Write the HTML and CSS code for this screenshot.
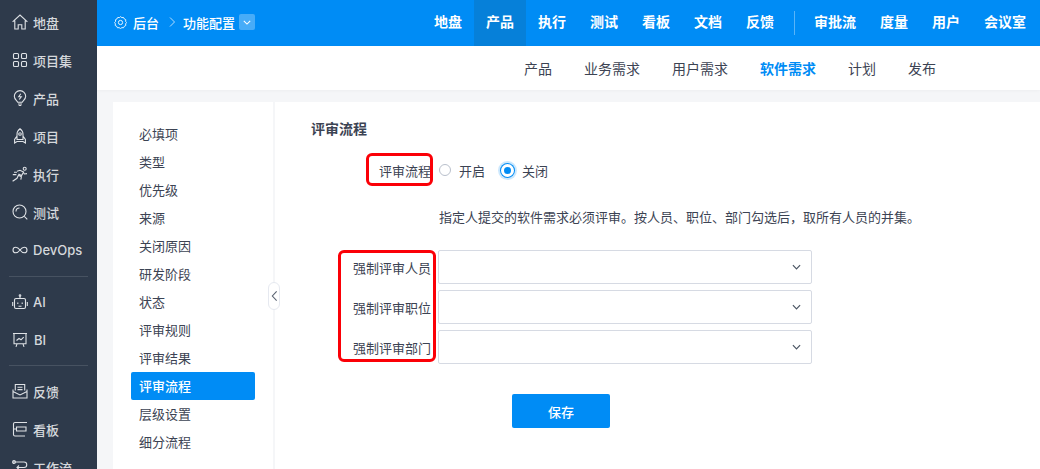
FILE: index.html
```html
<!DOCTYPE html>
<html lang="zh-CN">
<head>
<meta charset="utf-8">
<title>功能配置</title>
<link rel="stylesheet" href="styles.css">
</head>
<body>
<div class="app">
  <aside class="side">
    <a class="side-item"><svg class="side-icon" viewBox="0 0 16 16"><path d="M.6 7.900 8 1l7.400 6.900M2.800 6.400V15h3.400v-4.200h3.600V15h3.400V6.400"/></svg><span>地盘</span></a>
    <a class="side-item"><svg class="side-icon" viewBox="0 0 16 16"><rect x="1.500" y="1.500" width="5" height="5" rx="1"/><rect x="9.500" y="1.500" width="5" height="5" rx="1"/><rect x="1.500" y="9.500" width="5" height="5" rx="1"/><rect x="9.500" y="9.500" width="5" height="5" rx="1"/></svg><span>项目集</span></a>
    <a class="side-item"><svg class="side-icon" viewBox="0 0 16 16"><path d="M5.800 12.300C5.500 10.700 2.300 9.600 2.300 6.300a5.700 5.700 0 0 1 11.400 0c0 3.300-3.200 4.400-3.500 6zM6 14h4M6.700 15.500h2.600M8.800 3.700 6.700 6.800h2.600L7.200 9.500"/></svg><span>产品</span></a>
    <a class="side-item"><svg class="side-icon" viewBox="0 0 16 16"><path d="M8 .8c2 1.500 3 3.400 3 5.700v5H5v-5C5 4.200 6 2.300 8 .8zM5 8 2.600 11.500V15L5 13.500h6l2.400 1.500v-3.500L11 8"/><circle cx="8" cy="6" r="1.300"/></svg><span>项目</span></a>
    <a class="side-item"><svg class="side-icon" viewBox="0 0 16 16"><path d="M.6 15.300 5 12.300l1.400-3 3 1.400-.6 3M5 5.300l3-1 3.600 1.800-2 3.500-3.100-1.500M.8 8.600h3.600M2 6.300h3"/><circle cx="12.700" cy="2.700" r="1.500"/><path d="m11.300 6.300 1 1.700 2.700-.4"/></svg><span>执行</span></a>
    <a class="side-item"><svg class="side-icon" viewBox="0 0 16 16"><circle cx="7.500" cy="7.500" r="6.500"/><path d="m12.300 12.300 3 3M4 7.500A3.500 3.500 0 0 1 7.500 4"/></svg><span>测试</span></a>
    <a class="side-item"><svg class="side-icon" viewBox="0 0 16 16"><path d="M8 8C6.800 6.400 5.700 5.200 3.800 5.200a2.800 2.800 0 0 0 0 5.600C5.700 10.800 6.800 9.600 8 8s2.300-2.800 4.200-2.800a2.800 2.800 0 0 1 0 5.600C10.300 10.800 9.200 9.600 8 8z"/></svg><span>DevOps</span></a>
    <div class="side-rule side-rule-first"></div>
    <a class="side-item"><svg class="side-icon" viewBox="0 0 16 16"><rect x="2.500" y="4.500" width="11" height="10" rx="1.500"/><path d="M8 2.500v2M.7 8v4M15.300 8v4M5.800 8.500v1.600M10.200 8.500v1.600M6.500 12.300h3"/><circle cx="8" cy="1.600" r=".8"/></svg><span>AI</span></a>
    <a class="side-item side-item-bi"><svg class="side-icon" viewBox="0 0 16 16"><path d="M1 1.500h14M2 1.500v10.300h12V1.500M5 11.800l-1 3M11 11.800l1 3M4.500 8.500l2.500-2 2 1.300 2.700-2.600"/></svg><span>BI</span></a>
    <div class="side-rule"></div>
    <a class="side-item"><svg class="side-icon" viewBox="0 0 16 16"><path d="M3.300 7.500V1.500h9.400v6M1 6.500v8.500h14V6.500M1 8.500l7 3.500 7-3.500M5.500 4.200h5M5.500 6.600h5"/></svg><span>反馈</span></a>
    <a class="side-item"><svg class="side-icon" viewBox="0 0 16 16"><path d="M15 1.500H3a1.500 1.500 0 0 0-1.500 1.500v10.500A1.500 1.500 0 0 0 3 15h10M4.500 6h9.500v4H4.500zM1.500 8h3"/></svg><span>看板</span></a>
    <a class="side-item"><svg class="side-icon" viewBox="0 0 16 16"><path d="M1 3h11a2.500 2.500 0 0 1 0 5.500H5M7 6.500l-2 2 2 2"/><circle cx="2" cy="3" r="1.400"/></svg><span>工作流</span></a>
  </aside>
  <div class="workspace">
    <header class="top">
      <div class="crumbs">
        <svg class="crumb-gear" viewBox="0 0 16 16"><path d="M8 .8l1.700 1.200 2-.2 1 1.800 1.800 1-.2 2L15.500 8l-1.200 1.700.2 2-1.800 1-1 1.800-2-.2L8 15.500l-1.700-1.200-2 .2-1-1.800-1.800-1 .2-2L.8 8 2 6.600l-.2-2 1.800-1 1-1.800 2 .2z"/><circle cx="8" cy="8" r="2.600"/></svg>
        <span class="crumb">后台</span>
        <svg class="crumb-sep" viewBox="0 0 8 12"><path d="m2 1.500 4.500 4.500L2 10.500"/></svg>
        <span class="crumb">功能配置</span>
        <span class="crumb-drop"><svg viewBox="0 0 10 6"><path d="m1 1 4 4 4-4"/></svg></span>
      </div>
      <nav class="main-nav">
        <a>地盘</a><a class="is-on">产品</a><a>执行</a><a>测试</a><a>看板</a><a>文档</a><a>反馈</a>
        <i class="nav-rule"></i>
        <a>审批流</a><a>度量</a><a>用户</a><a>会议室</a>
      </nav>
    </header>
    <nav class="sub-nav">
      <a>产品</a><a>业务需求</a><a>用户需求</a><a class="is-on">软件需求</a><a>计划</a><a>发布</a>
    </nav>
    <div class="content">
      <ul class="menu">
        <li>必填项</li><li>类型</li><li>优先级</li><li>来源</li><li>关闭原因</li><li>研发阶段</li><li>状态</li><li>评审规则</li><li>评审结果</li><li class="is-on">评审流程</li><li>层级设置</li><li>细分流程</li>
      </ul>
      <main class="panel">
        <button class="collapse" type="button" aria-label="收起"><svg viewBox="0 0 8 14"><path d="M6.500 1.500 1.500 7l5 5.500"/></svg></button>
        <h2 class="panel-title">评审流程</h2>
        <div class="field field-radio">
          <span class="label">评审流程</span>
          <label class="radio"><i class="dot"></i>开启</label>
          <label class="radio"><i class="dot dot-on"></i>关闭</label>
          <span class="mark mark-a"></span>
        </div>
        <p class="hint">指定人提交的软件需求必须评审。按人员、职位、部门勾选后，取所有人员的并集。</p>
        <div class="selects">
          <span class="mark mark-b"></span>
          <div class="field"><span class="label">强制评审人员</span><div class="select"><svg viewBox="0 0 10 6"><path d="m1 1 4 4 4-4"/></svg></div></div>
          <div class="field"><span class="label">强制评审职位</span><div class="select"><svg viewBox="0 0 10 6"><path d="m1 1 4 4 4-4"/></svg></div></div>
          <div class="field"><span class="label">强制评审部门</span><div class="select"><svg viewBox="0 0 10 6"><path d="m1 1 4 4 4-4"/></svg></div></div>
        </div>
        <button class="save" type="button">保存</button>
      </main>
    </div>
  </div>
</div>
</body>
</html>
```
FILE: styles.css
```css
* { box-sizing: border-box; }
html, body { margin: 0; height: 100%; overflow: hidden; }
body {
  font-family: Inter, "Noto Sans CJK SC", sans-serif;
  font-size: 13px;
  color: #3c4353;
  background: #f5f6f8;
}
a { text-decoration: none; color: inherit; }
.app { display: flex; height: 469px; overflow: hidden; }

.side {
  flex: none;
  width: 97px;
  background: #2e3a4b;
  color: #d5d8dc;
  padding: 3px 9px 0 12px;
  overflow: hidden;
}
.side-item {
  display: flex;
  align-items: center;
  gap: 5px;
  height: 38px;
  font-size: 13px;
  font-weight: 500;
  white-space: nowrap;
}
.side-item-bi { gap: 6px; }
.side-icon {
  flex: none;
  width: 16px;
  height: 16px;
  fill: none;
  stroke: #dfe2e6;
  stroke-width: 1.100;
}
.side-rule { height: 1px; margin: 6px 0 6px -3px; background: #475261; }
.side-rule-first { margin-top: 7px; }

.workspace { flex: 1; min-width: 0; display: flex; flex-direction: column; }
.top {
  flex: none;
  height: 46px;
  background: #008cf5;
  color: #fff;
  display: flex;
  align-items: center;
  justify-content: space-between;
  padding: 0 2px 0 17px;
}
.crumbs { display: flex; align-items: center; font-size: 13px; font-weight: 500; padding-bottom: 2px; }
.crumb-gear { width: 13px; height: 13px; fill: none; stroke: #fff; stroke-width: 1.100; margin-right: 6px; }
.crumb-sep { width: 8px; height: 12px; fill: none; stroke: rgba(255,255,255,.7); stroke-width: 1; margin: 0 7px 0 9px; }
.crumb-drop {
  width: 16px;
  height: 16px;
  margin-left: 4px;
  border-radius: 2px;
  background: rgba(255,255,255,.28);
  display: flex;
  align-items: center;
  justify-content: center;
}
.crumb-drop svg { width: 8px; height: 5px; fill: none; stroke: #fff; stroke-width: 1.300; }
.main-nav { display: flex; align-items: center; height: 46px; font-size: 14px; font-weight: 600; }
.main-nav a { padding: 0 12px; height: 46px; line-height: 44px; }
.main-nav a.is-on { background: #0680d9; }
.nav-rule { width: 1px; height: 24px; margin: 0 7px 0 8px; background: rgba(255,255,255,.35); }

.sub-nav {
  flex: none;
  height: 44px;
  background: #fff;
  display: flex;
  align-items: center;
  gap: 32px;
  padding-left: 427px;
  font-size: 14px;
  box-shadow: 0 1px 3px rgba(0,0,0,.03);
}
.sub-nav a.is-on { color: #008cf5; font-weight: 700; }

.content { flex: 1; min-height: 0; display: flex; gap: 2px; padding: 12px 0 0 16px; }
.menu {
  flex: none;
  width: 160px;
  margin: 0;
  padding: 18px 18px 0;
  list-style: none;
  background: #fff;
}
.menu li { height: 28px; line-height: 28px; padding-left: 8px; border-radius: 2px; }
.menu li.is-on { background: #008cf5; color: #fff; font-weight: 500; }

.panel { position: relative; flex: 1; background: #fff; padding: 16px 0 0 36px; }
.collapse {
  position: absolute;
  left: -7px;
  top: 180px;
  width: 12px;
  height: 28px;
  padding: 0;
  background: #fff;
  border: 1px solid #e6e9f0;
  border-radius: 6px;
  display: flex;
  align-items: center;
  justify-content: center;
}
.collapse svg { width: 7px; height: 12px; fill: none; stroke: #5b6472; stroke-width: 1.300; }
.panel-title { margin: 0; font-size: 14px; font-weight: 600; line-height: 22px; }
.field { position: relative; display: flex; align-items: center; }
.field-radio { margin-top: 19px; height: 22px; }
.label { flex: none; width: 120px; margin-right: 7px; padding-top: 2px; text-align: right; white-space: nowrap; line-height: 20px; color: #3c4353; }
.radio { display: flex; align-items: center; gap: 8px; margin-right: 15px; }
.dot {
  display: block;
  width: 12px;
  height: 12px;
  margin-left: 1px;
  border-radius: 50%;
  border: 1px solid #b9c0cc;
}
.dot-on {
  width: 13px;
  height: 13px;
  border: 3px solid #fff;
  background: #008cf5;
  box-shadow: 0 0 0 1px #008cf5, 0 0 0 3px rgba(0,140,245,.2);
}
.hint { margin: 26px 0 0 128px; line-height: 20px; white-space: nowrap; }
.selects { position: relative; display: flex; flex-direction: column; gap: 6px; margin-top: 23px; }
.select {
  width: 374px;
  height: 34px;
  border: 1px solid #d6dae3;
  border-radius: 2px;
  background: #fff;
  display: flex;
  align-items: center;
  justify-content: flex-end;
  padding-right: 10px;
}
.select svg { width: 9px; height: 6px; fill: none; stroke: #4b5563; stroke-width: 1.300; }
.save {
  display: block;
  width: 98px;
  height: 34px;
  margin: 30px 0 0 201px;
  border: 0;
  border-radius: 2px;
  background: #008cf5;
  color: #fff;
  font: 500 13px Inter, "Noto Sans CJK SC", sans-serif;
}
.mark {
  position: absolute;
  border: 3px solid #fb0007;
  border-radius: 6px;
  pointer-events: none;
}
.mark-a { left: 55px; top: -6px; width: 67px; height: 33px; }
.mark-b { left: 27px; top: 0; width: 98px; height: 112px; }
```
